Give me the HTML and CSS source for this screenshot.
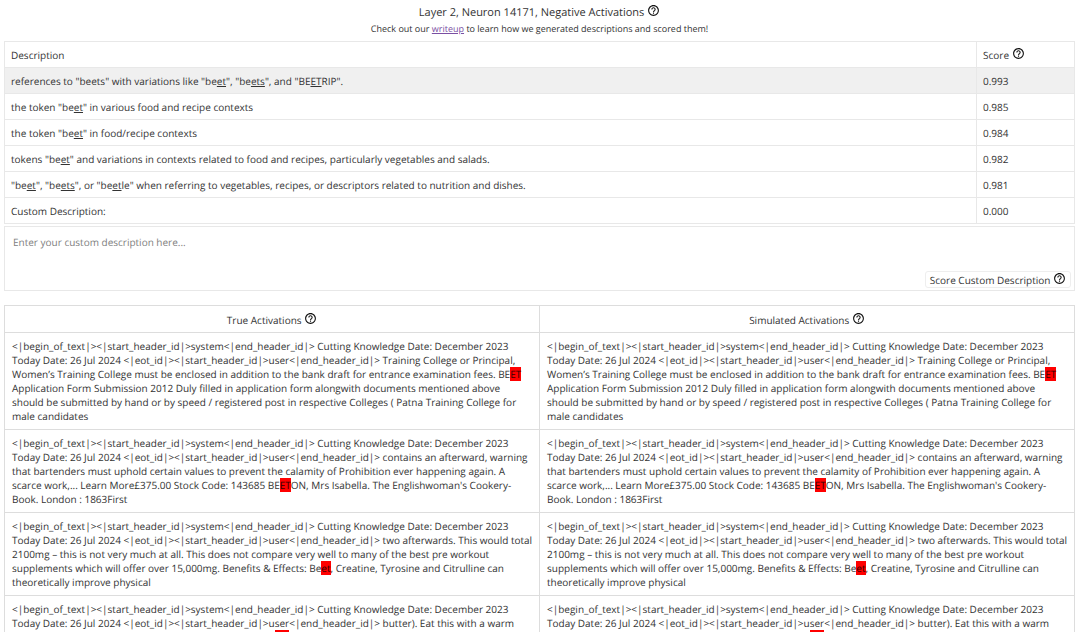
FILE: index.html
```html
<!DOCTYPE html>
<html lang="en">
<head>
    <meta charset="UTF-8">
    <meta name="viewport" content="width=device-width, initial-scale=1.0">
    <title>Layer 2, Neuron 14171</title>
    <link rel="stylesheet" href="styles.css">
</head>
<body>
    <svg class="sprite" aria-hidden="true">
        <symbol id="help" viewBox="0 0 24 24">
            <path d="M11 18h2v-2h-2v2zm1-16C6.48 2 2 6.48 2 12s4.48 10 10 10 10-4.48 10-10S17.52 2 12 2zm0 18c-4.41 0-8-3.59-8-8s3.59-8 8-8 8 3.59 8 8-3.59 8-8 8zm0-14c-2.21 0-4 1.79-4 4h2c0-1.1.9-2 2-2s2 .9 2 2c0 2-3 1.75-3 5h2c0-2.25 3-2.5 3-5 0-2.21-1.79-4-4-4z"/>
        </symbol>
    </svg>

    <header class="header">
        <h1>Layer 2, Neuron 14171, Negative Activations <svg class="help"><use href="#help"/></svg></h1>
        <p>Check out our <a href="#writeup">writeup</a> to learn how we generated descriptions and scored them!</p>
    </header>

    <main>
        <table class="descriptions">
            <thead>
                <tr><th>Description</th><th class="score">Score <svg class="help"><use href="#help"/></svg></th></tr>
            </thead>
            <tbody>
                <tr class="selected"><td>references to "beets" with variations like "be<u>et</u>", "be<u>ets</u>", and "BE<u>ET</u>RIP".</td><td>0.993</td></tr>
                <tr><td>the token "be<u>et</u>" in various food and recipe contexts</td><td>0.985</td></tr>
                <tr><td>the token "be<u>et</u>" in food/recipe contexts</td><td>0.984</td></tr>
                <tr><td>tokens "be<u>et</u>" and variations in contexts related to food and recipes, particularly vegetables and salads.</td><td>0.982</td></tr>
                <tr><td>"be<u>et</u>", "be<u>ets</u>", or "be<u>et</u>le" when referring to vegetables, recipes, or descriptors related to nutrition and dishes.</td><td>0.981</td></tr>
                <tr><td>Custom Description:</td><td>0.000</td></tr>
            </tbody>
        </table>

        <div class="custom">
            <textarea aria-label="Custom description" placeholder="Enter your custom description here..."></textarea>
            <button type="button">Score Custom Description <svg class="help"><use href="#help"/></svg></button>
        </div>

        <table class="activations">
            <thead>
                <tr>
                    <th>True Activations <svg class="help"><use href="#help"/></svg></th>
                    <th>Simulated Activations <svg class="help"><use href="#help"/></svg></th>
                </tr>
            </thead>
            <tbody>
                <tr>
                    <td>&lt;|begin_of_text|&gt;&lt;|start_header_id|&gt;system&lt;|end_header_id|&gt; Cutting Knowledge Date: December 2023 Today Date: 26 Jul 2024 &lt;|eot_id|&gt;&lt;|start_header_id|&gt;user&lt;|end_header_id|&gt; Training College or Principal, Women’s Training College must be enclosed in addition to the bank draft for entrance examination fees. BE<mark>ET</mark> Application Form Submission 2012 Duly filled in application form alongwith documents mentioned above should be submitted by hand or by speed / registered post in respective Colleges ( Patna Training College for male candidates</td>
                    <td>&lt;|begin_of_text|&gt;&lt;|start_header_id|&gt;system&lt;|end_header_id|&gt; Cutting Knowledge Date: December 2023 Today Date: 26 Jul 2024 &lt;|eot_id|&gt;&lt;|start_header_id|&gt;user&lt;|end_header_id|&gt; Training College or Principal, Women’s Training College must be enclosed in addition to the bank draft for entrance examination fees. BE<mark>ET</mark> Application Form Submission 2012 Duly filled in application form alongwith documents mentioned above should be submitted by hand or by speed / registered post in respective Colleges ( Patna Training College for male candidates</td>
                </tr>
                <tr>
                    <td>&lt;|begin_of_text|&gt;&lt;|start_header_id|&gt;system&lt;|end_header_id|&gt; Cutting Knowledge Date: December 2023 Today Date: 26 Jul 2024 &lt;|eot_id|&gt;&lt;|start_header_id|&gt;user&lt;|end_header_id|&gt; contains an afterward, warning that bartenders must uphold certain values to prevent the calamity of Prohibition ever happening again. A scarce work,... Learn More£375.00 Stock Code: 143685 BE<mark>ET</mark>ON, Mrs Isabella. The Englishwoman's Cookery-Book. London : 1863First</td>
                    <td>&lt;|begin_of_text|&gt;&lt;|start_header_id|&gt;system&lt;|end_header_id|&gt; Cutting Knowledge Date: December 2023 Today Date: 26 Jul 2024 &lt;|eot_id|&gt;&lt;|start_header_id|&gt;user&lt;|end_header_id|&gt; contains an afterward, warning that bartenders must uphold certain values to prevent the calamity of Prohibition ever happening again. A scarce work,... Learn More£375.00 Stock Code: 143685 BE<mark>ET</mark>ON, Mrs Isabella. The Englishwoman's Cookery-Book. London : 1863First</td>
                </tr>
                <tr>
                    <td>&lt;|begin_of_text|&gt;&lt;|start_header_id|&gt;system&lt;|end_header_id|&gt; Cutting Knowledge Date: December 2023 Today Date: 26 Jul 2024 &lt;|eot_id|&gt;&lt;|start_header_id|&gt;user&lt;|end_header_id|&gt; two afterwards. This would total 2100mg – this is not very much at all. This does not compare very well to many of the best pre workout supplements which will offer over 15,000mg. Benefits &amp; Effects: Be<mark>et</mark>, Creatine, Tyrosine and Citrulline can theoretically improve physical</td>
                    <td>&lt;|begin_of_text|&gt;&lt;|start_header_id|&gt;system&lt;|end_header_id|&gt; Cutting Knowledge Date: December 2023 Today Date: 26 Jul 2024 &lt;|eot_id|&gt;&lt;|start_header_id|&gt;user&lt;|end_header_id|&gt; two afterwards. This would total 2100mg – this is not very much at all. This does not compare very well to many of the best pre workout supplements which will offer over 15,000mg. Benefits &amp; Effects: Be<mark>et</mark>, Creatine, Tyrosine and Citrulline can theoretically improve physical</td>
                </tr>
                <tr>
                    <td>&lt;|begin_of_text|&gt;&lt;|start_header_id|&gt;system&lt;|end_header_id|&gt; Cutting Knowledge Date: December 2023 Today Date: 26 Jul 2024 &lt;|eot_id|&gt;&lt;|start_header_id|&gt;user&lt;|end_header_id|&gt; butter). Eat this with a warm bowl of soup, or with a simple salad of sliced, roasted be<mark>ets</mark> and goat cheese.</td>
                    <td>&lt;|begin_of_text|&gt;&lt;|start_header_id|&gt;system&lt;|end_header_id|&gt; Cutting Knowledge Date: December 2023 Today Date: 26 Jul 2024 &lt;|eot_id|&gt;&lt;|start_header_id|&gt;user&lt;|end_header_id|&gt; butter). Eat this with a warm bowl of soup, or with a simple salad of sliced, roasted be<mark>ets</mark> and goat cheese.</td>
                </tr>
            </tbody>
        </table>
    </main>
</body>
</html>
```
FILE: styles.css
```css
/* Base styles */
body {
    margin: 0;
    padding: 4px 5px 4px 4px;
    font-family: "Open Sans", "Noto Sans", sans-serif;
    font-size: 10px;
    line-height: 14px;
    text-rendering: geometricPrecision;
    color: #333;
    background: #fff;
}

.sprite {
    display: none;
}

.help {
    width: 13px;
    height: 13px;
    fill: #111;
    vertical-align: -1px;
}

/* Header */
.header {
    text-align: center;
}

.header h1 {
    margin: 0;
    font-size: 11px;
    font-weight: 400;
    line-height: 16px;
}

.header p {
    margin: 1px 0 5px;
    font-size: 9px;
}

.header a {
    color: #7a4fa3;
}

/* Tables */
table {
    width: 100%;
    border-collapse: collapse;
}

th {
    font-weight: 400;
}

/* Description scores */
.descriptions th,
.descriptions td {
    height: 25px;
    padding: 0 6px;
    text-align: left;
    border: 1px solid #e8e8e8;
}

.descriptions .score {
    width: 85px;
}

.descriptions .selected {
    background: #f0f0f0;
}

/* Custom description box */
.custom {
    position: relative;
    margin: 2px 0 14px;
}

.custom textarea {
    display: block;
    box-sizing: border-box;
    width: 100%;
    height: 65px;
    padding: 8px;
    font: inherit;
    color: inherit;
    text-rendering: inherit;
    border: 1px solid #e8e8e8;
    resize: none;
}

.custom textarea::placeholder {
    color: #808080;
}

.custom button {
    position: absolute;
    right: 4px;
    bottom: 3px;
    padding: 0 4px;
    font: inherit;
    color: inherit;
    text-rendering: inherit;
    background: #fff;
    border: 1px solid #eee;
    border-radius: 3px;
}

/* Activations */
.activations {
    table-layout: fixed;
}

.activations th,
.activations td {
    border: 1px solid #ddd;
}

.activations th {
    height: 26px;
    padding: 0;
}

.activations td {
    padding: 6px 5px 6px 7px;
    vertical-align: top;
}

.activations mark {
    color: #300;
    background: #f00;
}
```
